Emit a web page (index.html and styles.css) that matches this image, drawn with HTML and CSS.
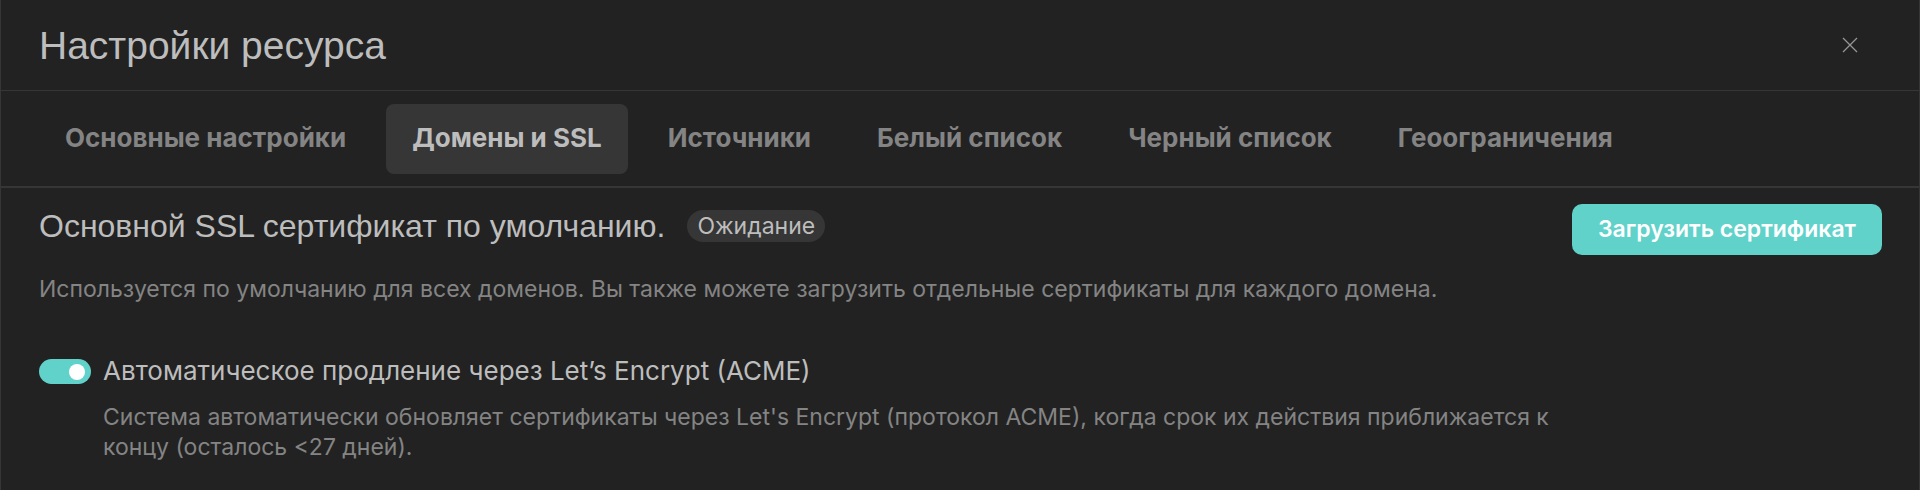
FILE: index.html
```html
<!DOCTYPE html>
<html lang="ru">
<head>
<meta charset="utf-8">
<meta name="viewport" content="width=device-width, initial-scale=1">
<title>Настройки ресурса</title>
<link rel="stylesheet" href="styles.css">
</head>
<body>
<main class="panel">
  <header class="panel-header">
    <h1 class="panel-title">Настройки ресурса</h1>
    <button class="close" type="button" aria-label="Закрыть">
      <svg class="close-icon" viewBox="0 0 16 16" aria-hidden="true"><path d="M1 1L15 15M15 1L1 15"/></svg>
    </button>
  </header>
  <nav class="tabs" aria-label="Разделы настроек">
    <button class="tab" type="button">Основные настройки</button>
    <button class="tab tab-active" type="button" aria-current="page">Домены и SSL</button>
    <button class="tab" type="button">Источники</button>
    <button class="tab" type="button">Белый список</button>
    <button class="tab" type="button">Черный список</button>
    <button class="tab" type="button">Геоограничения</button>
  </nav>
  <section class="content">
    <div class="cert-row">
      <div class="cert-heading">
        <h2 class="cert-title">Основной SSL сертификат по умолчанию.</h2>
        <span class="badge">Ожидание</span>
      </div>
      <button class="upload" type="button">Загрузить сертификат</button>
    </div>
    <p class="note">Используется по умолчанию для всех доменов. Вы также можете загрузить отдельные сертификаты для каждого домена.</p>
    <div class="renewal">
      <input class="switch" type="checkbox" role="switch" id="acme" aria-describedby="acme-note" checked>
      <div class="renewal-text">
        <label class="renewal-label" for="acme">Автоматическое продление через Let’s Encrypt (ACME)</label>
        <p class="note" id="acme-note">Система автоматически обновляет сертификаты через Let's Encrypt (протокол ACME), когда срок их действия приближается к концу (осталось &lt;27 дней).</p>
      </div>
    </div>
  </section>
</main>
</body>
</html>
```
FILE: styles.css
```css
* {
  box-sizing: border-box;
}

body {
  margin: 0;
  background: #222;
  color: #bdbdbd;
  font-family: Inter, "Liberation Sans", Arial, sans-serif;
}

h1, h2, p {
  margin: 0;
  font-weight: 400;
}

button {
  border: 0;
  background: none;
  font-family: inherit;
  cursor: pointer;
}

.panel {
  min-height: 100vh;
  border: solid #363636;
  border-width: 0 1px;
}

.panel-header {
  display: flex;
  align-items: center;
  justify-content: space-between;
  padding: 20px 56px 18px 38px;
  border-bottom: 1px solid #363636;
}

.panel-title {
  font-family: "Liberation Sans", Arial, sans-serif;
  font-size: 39px;
  line-height: 52px;
}

.close {
  display: flex;
  padding: 4px 5px 6px;
}

.close-icon {
  width: 16px;
  height: 16px;
  fill: none;
  stroke: #969696;
  stroke-width: 1.3;
}

.tabs {
  display: flex;
  flex-wrap: wrap;
  gap: 14px;
  padding: 13px 38px 12px;
  border-bottom: 2px solid #363636;
}

.tab {
  padding: 0 26px 2px;
  border-radius: 8px;
  color: #848484;
  font-size: 26px;
  font-weight: 700;
  line-height: 68px;
}

.tab-active {
  background: #363636;
  color: #bdbdbd;
}

.content {
  padding: 16px 37px 28px 38px;
}

.cert-row {
  display: flex;
  align-items: flex-start;
  justify-content: space-between;
  gap: 24px;
}

.cert-heading {
  display: flex;
  align-items: center;
  gap: 22px;
}

.cert-title {
  font-family: "Liberation Sans", Arial, sans-serif;
  font-size: 32px;
  line-height: 44px;
}

.badge {
  padding: 0 10px;
  border-radius: 16px;
  background: #363636;
  font-size: 23px;
  line-height: 32px;
}

.upload {
  padding: 0 26px;
  border-radius: 10px;
  background: #60d2ca;
  color: #fff;
  font-size: 23px;
  font-weight: 600;
  line-height: 51px;
}

.note {
  color: #848484;
  font-size: 23px;
  line-height: 30px;
}

.cert-row + .note {
  margin-top: 19px;
}

.renewal {
  display: flex;
  gap: 12px;
  margin-top: 51px;
}

.switch {
  display: flex;
  flex: none;
  align-items: center;
  width: 52px;
  height: 25px;
  margin: 4px 0 0;
  padding: 0 6px;
  border-radius: 13px;
  background: #555;
  appearance: none;
  cursor: pointer;
}

.switch::before {
  width: 16px;
  height: 16px;
  border-radius: 50%;
  background: #fff;
  content: "";
}

.switch:checked {
  justify-content: flex-end;
  background: #60d2ca;
}

.renewal-text {
  max-width: 1480px;
}

.renewal-label {
  display: block;
  margin-bottom: 15px;
  font-size: 26px;
  line-height: 32px;
}
```
